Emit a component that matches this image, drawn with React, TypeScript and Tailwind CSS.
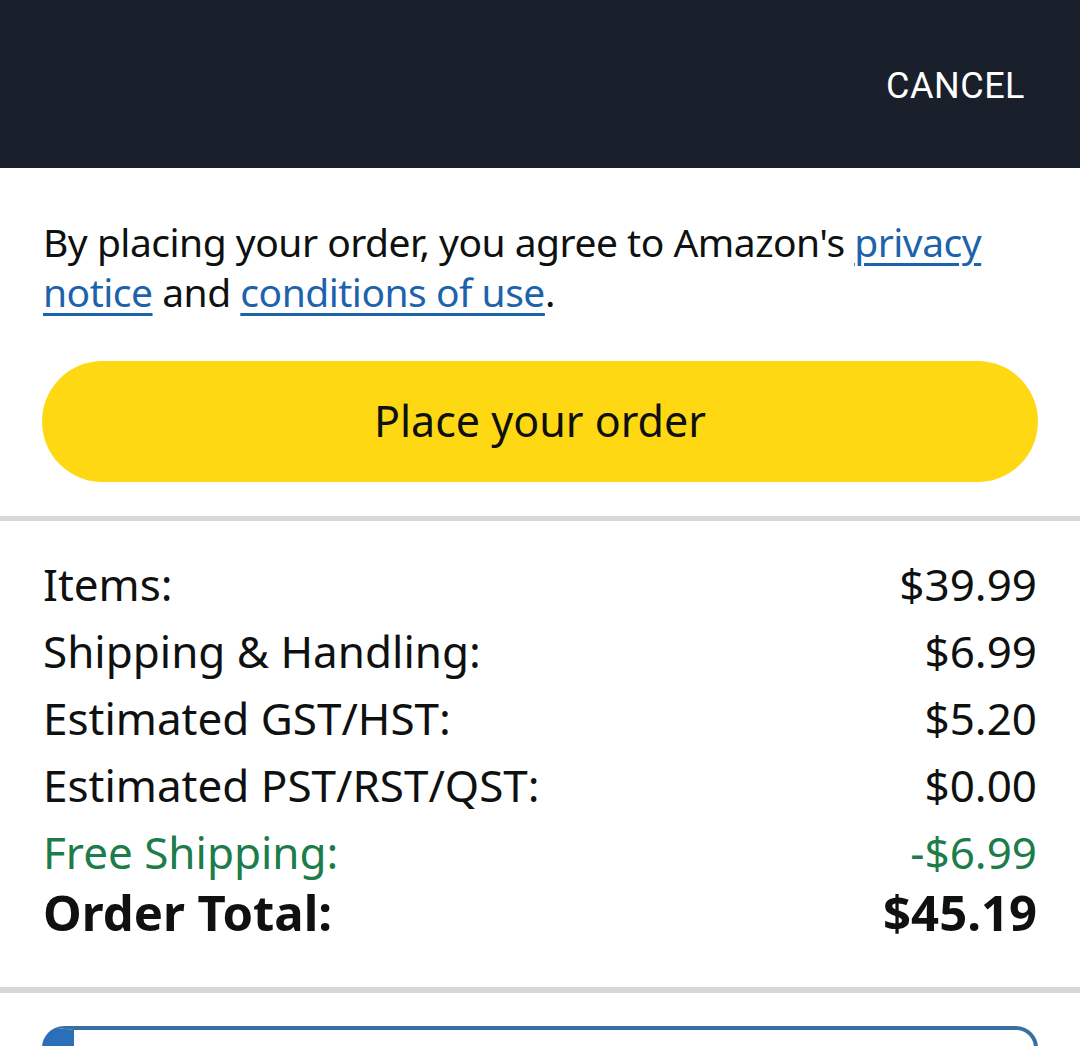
import React from "react";

const rows: { label: string; value: string; green?: boolean }[] = [
  { label: "Items:", value: "$39.99" },
  { label: "Shipping & Handling:", value: "$6.99" },
  { label: "Estimated GST/HST:", value: "$5.20" },
  { label: "Estimated PST/RST/QST:", value: "$0.00" },
  { label: "Free Shipping:", value: "-$6.99", green: true },
];

export default function App() {
  return (
    <div className="w-[1080px] h-[1046px] overflow-hidden bg-white" style={{ fontFamily: '"Noto Sans", sans-serif' }}>
      <div className="h-[168px] bg-[#19202b] flex justify-end items-start pr-[55px] pt-[64px]">
        <span className="text-white text-[36px] leading-[44px] tracking-[0.5px]" style={{ fontFamily: "Roboto, sans-serif" }}>
          CANCEL
        </span>
      </div>
      <div className="px-[43px]">
        <p className="pt-[49px] text-[39px] leading-[50px] tracking-[-0.5px] text-[#0f1111]">
          By placing your order, you agree to Amazon's{" "}
          <span className="text-[#1d63ac] underline decoration-[3px] underline-offset-[6px]">privacy notice</span> and{" "}
          <span className="text-[#1d63ac] underline decoration-[3px] underline-offset-[6px]">conditions of use</span>.
        </p>
      </div>
      <div className="px-[42px] mt-[44px]">
        <div className="h-[121px] rounded-full bg-[#ffd814] flex items-center justify-center text-[43px] text-[#0f1111]">
          Place your order
        </div>
      </div>
      <div className="mt-[34px] h-[5px] bg-[#d5d9d9]" />
      <div className="px-[43px] pt-[29px] text-[44px] text-[#0f1111]">
        {rows.map((r) => (
          <div key={r.label} className={`flex justify-between items-center h-[67px] ${r.green ? "text-[#1c7c4a]" : ""}`}>
            <span>{r.label}</span>
            <span>{r.value}</span>
          </div>
        ))}
        <div className="flex justify-between items-center h-[56px] font-bold text-[49px]">
          <span>Order Total:</span>
          <span>$45.19</span>
        </div>
      </div>
      <div className="mt-[46px] h-[6px] bg-[#d5d9d9]" />
      <div className="px-[42px] mt-[33px]">
        <div className="h-[80px] rounded-[22px] border-[4px] border-[#3a70a0] border-l-[32px] border-l-[#2a6fb7]" />
      </div>
    </div>
  );
}
